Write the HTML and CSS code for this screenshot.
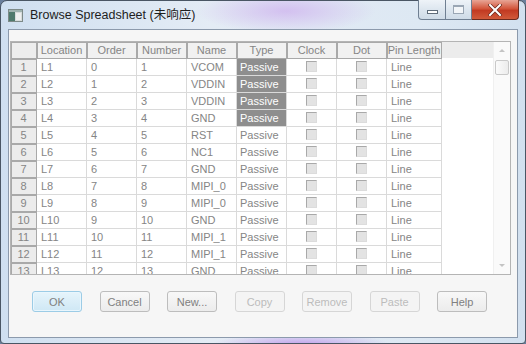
FILE: index.html
```html
<!DOCTYPE html>
<html>
	<head>
		<meta charset="UTF-8">
		<title>Browse Spreadsheet</title>
		<link rel="stylesheet" href="styles.css">
	</head>
	<body>
		<div class="window">
			<div class="titlebar">
				<svg class="app-icon" width="15" height="13" viewBox="0 0 15 13">
					<rect x="0.5" y="0.5" width="14" height="12" fill="#d7dcdc" stroke="#7d8a88"/>
					<rect x="1" y="1" width="13" height="2" fill="#9fb3b0"/>
					<rect x="1" y="3" width="6" height="9" fill="#4f7a6d"/>
					<rect x="8" y="4" width="5" height="7" fill="#eef0ef"/>
				</svg>
				<span class="title">Browse Spreadsheet (未响应)</span>
				<div class="caption">
					<div class="cap min"><span class="min-bar"></span></div>
					<div class="cap max"><span class="max-box"></span></div>
					<div class="cap close">
						<svg width="14" height="12" viewBox="0 0 14 12">
							<path d="M2 1 L12 11 M12 1 L2 11" stroke="#6b2a1e" stroke-width="3.4" stroke-linecap="square"/>
							<path d="M2 1 L12 11 M12 1 L2 11" stroke="#ffffff" stroke-width="2" stroke-linecap="square"/>
						</svg>
					</div>
				</div>
			</div>
			<div class="client">
				<div class="grid">
					<div class="sheet">
						<table>
							<colgroup>
								<col class="c-rh"><col class="c50"><col class="c50"><col class="c50"><col class="c50"><col class="c50"><col class="c50"><col class="c50"><col class="c55">
							</colgroup>
							<thead>
								<tr><th class="corner"></th><th>Location</th><th>Order</th><th>Number</th><th>Name</th><th>Type</th><th>Clock</th><th>Dot</th><th>Pin Length</th></tr>
							</thead>
							<tbody id="rows"></tbody>
						</table>
					</div>
					<div class="vscroll">
						<div class="sb-btn"><span class="arrow-up"></span></div>
						<div class="thumb"></div>
						<div class="sb-track"></div>
						<div class="sb-btn"><span class="arrow-down"></span></div>
					</div>
				</div>
				<div class="buttons">
					<button class="btn default">OK</button>
					<button class="btn">Cancel</button>
					<button class="btn">New...</button>
					<button class="btn disabled">Copy</button>
					<button class="btn disabled">Remove</button>
					<button class="btn disabled">Paste</button>
					<button class="btn">Help</button>
				</div>
			</div>
		</div>

		<script>
			var names=["VCOM","VDDIN","VDDIN","GND","RST","NC1","GND","MIPI_0","MIPI_0","GND","MIPI_1","MIPI_1","GND"];
			var tbody=document.getElementById("rows");
			var html="";
			for(var i=0;i<names.length;i++){
				html+="<tr>"
					+"<td class='rh'>"+(i+1)+"</td>"
					+"<td>L"+(i+1)+"</td>"
					+"<td>"+i+"</td>"
					+"<td>"+(i+1)+"</td>"
					+"<td>"+names[i]+"</td>"
					+"<td class='"+(i<4?"type sel":"type")+"'>Passive</td>"
					+"<td class='ck'><span class='box'></span></td>"
					+"<td class='ck'><span class='box'></span></td>"
					+"<td>Line</td>"
					+"</tr>";
			}
			tbody.innerHTML=html;
		</script>
	</body>
</html>
```

FILE: styles.css
```css
*{
    margin: 0;
    padding: 0;
    box-sizing: border-box;
}
body{
    width: 526px;
    height: 344px;
    overflow: hidden;
    background: #6a7f9c;
    font-family: "Liberation Sans", Arial, sans-serif;
}
.window{
    width: 526px;
    height: 344px;
    border: 1px solid #4a5664;
    border-radius: 7px 7px 4px 4px;
    display: flex;
    flex-direction: column;
    background:
        radial-gradient(ellipse 90px 22px at 285px 10px, rgba(206,178,238,0.75), rgba(206,178,238,0) 100%),
        radial-gradient(ellipse 90px 12px at 300px 344px, rgba(190,150,235,0.9), rgba(190,150,235,0) 100%),
        linear-gradient(to right, #cfdff0, #e4ecf5 40%, #dde8f3 80%, #d2e0ef);
}
.titlebar{
    height: 28px;
    display: flex;
    align-items: flex-start;
    padding-left: 7px;
}
.app-icon{
    margin-top: 8px;
}
.title{
    margin-left: 7px;
    margin-top: 7px;
    font-family: "Liberation Sans", "Noto Sans CJK SC", sans-serif;
    font-size: 12.5px;
    color: #1e1e1e;
    line-height: 15px;
}
.caption{
    margin-left: auto;
    margin-right: 6px;
    margin-top: -1px;
    display: flex;
    height: 20px;
}
.cap{
    height: 20px;
    border: 1px solid #6f7f92;
    border-top: none;
    display: flex;
    align-items: center;
    justify-content: center;
    background: linear-gradient(#eef3f8, #dde6ef 50%, #cfdbe7);
}
.min{
    width: 28px;
    border-radius: 0 0 0 4px;
}
.max{
    width: 26px;
    border-left: none;
}
.close{
    width: 47px;
    border-left: none;
    border-color: #6b2a1e;
    border-radius: 0 0 4px 0;
    background: linear-gradient(#e8a596, #d3563c 45%, #c23a22 55%, #d15a3a);
}
.min-bar{
    width: 11px;
    height: 4px;
    margin-top: 5px;
    border: 1px solid #5f6c7a;
    background: #fff;
}
.max-box{
    width: 11px;
    height: 9px;
    border: 1px solid #9aa6b4;
    border-top-width: 2px;
    background: #f2f5f8;
}
.client{
    flex: 1;
    margin: 0 7px 5px 7px;
    border: 1px solid #8c9aac;
    background: #f6f6f6;
    display: flex;
    flex-direction: column;
}
.grid{
    margin: 11px 0 0 1px;
    width: 501px;
    height: 234px;
    border: 1px solid #b4b4b4;
    display: flex;
    background: #fff;
}
.sheet{
    flex: 1;
    overflow: hidden;
    background: linear-gradient(#ececec 0, #ececec 16px, #fff 16px);
}
table{
    table-layout: fixed;
    border-collapse: separate;
    border-spacing: 0;
    width: 431px;
    font-size: 11px;
    color: #858585;
}
.c-rh{ width: 26px; }
.c50{ width: 50px; }
.c55{ width: 55px; }
th, td{
    height: 17px;
    line-height: 16px;
    white-space: nowrap;
    overflow: hidden;
}
th{
    font-weight: normal;
    background: #f1f1f1;
    border-right: 1px solid #a9a9a9;
    border-bottom: 1px solid #a9a9a9;
    box-shadow: inset 1px 1px 0 #a9a9a9;
    text-align: center;
}
th.corner{
    background: #ededed;
}
td{
    padding: 0 4px;
    border-right: 1px solid #dadada;
    border-bottom: 1px solid #dadada;
    text-align: left;
}
td.rh{
    text-align: center;
    padding: 0;
    background: #ececec;
    border-right: 1px solid #a9a9a9;
    border-bottom: 1px solid #a9a9a9;
    box-shadow: inset 1px 1px 0 #a9a9a9;
}
td.type{
    padding-left: 3px;
}
td.sel{
    background: #8e8e8e;
    color: #fff;
}
td.ck{
    text-align: center;
    padding: 0;
}
.box{
    display: inline-block;
    width: 11px;
    height: 11px;
    vertical-align: -1px;
    background: #e3e3e3;
    border: 1px solid #dcdcdc;
    border-top-color: #a9a9a9;
    border-left-color: #a9a9a9;
}
.vscroll{
    width: 17px;
    display: flex;
    flex-direction: column;
    background: #fafafa;
    border-left: 1px solid #f0f0f0;
}
.sb-btn{
    height: 17px;
    display: flex;
    align-items: center;
    justify-content: center;
}
.arrow-up, .arrow-down{
    width: 0;
    height: 0;
    border-left: 3px solid transparent;
    border-right: 3px solid transparent;
}
.arrow-up{
    border-bottom: 3px solid #c4c4c4;
}
.arrow-down{
    border-top: 3px solid #c4c4c4;
}
.thumb{
    height: 15px;
    margin: 1px 1px 0 1px;
    border: 1px solid #c9c9c9;
    border-radius: 2px;
    background: linear-gradient(to right, #fbfbfb, #ececec);
}
.sb-track{
    flex: 1;
}
.buttons{
    display: flex;
    gap: 17.5px;
    margin-top: 16px;
    padding-left: 23px;
}
.btn{
    width: 50px;
    height: 21px;
    font-family: "Liberation Sans", Arial, sans-serif;
    font-size: 11px;
    color: #808080;
    border: 1px solid #bdbdbd;
    border-radius: 3px;
    background: linear-gradient(#f8f8f8, #ececec);
}
.btn.default{
    border-color: #9ccce6;
    background: linear-gradient(#e6f4fb, #cfe8f5);
    box-shadow: inset 0 0 0 1px #e9f6fd;
}
.btn.disabled{
    color: #bcbcbc;
    border-color: #d6d6d6;
    background: #f4f4f4;
}
```
